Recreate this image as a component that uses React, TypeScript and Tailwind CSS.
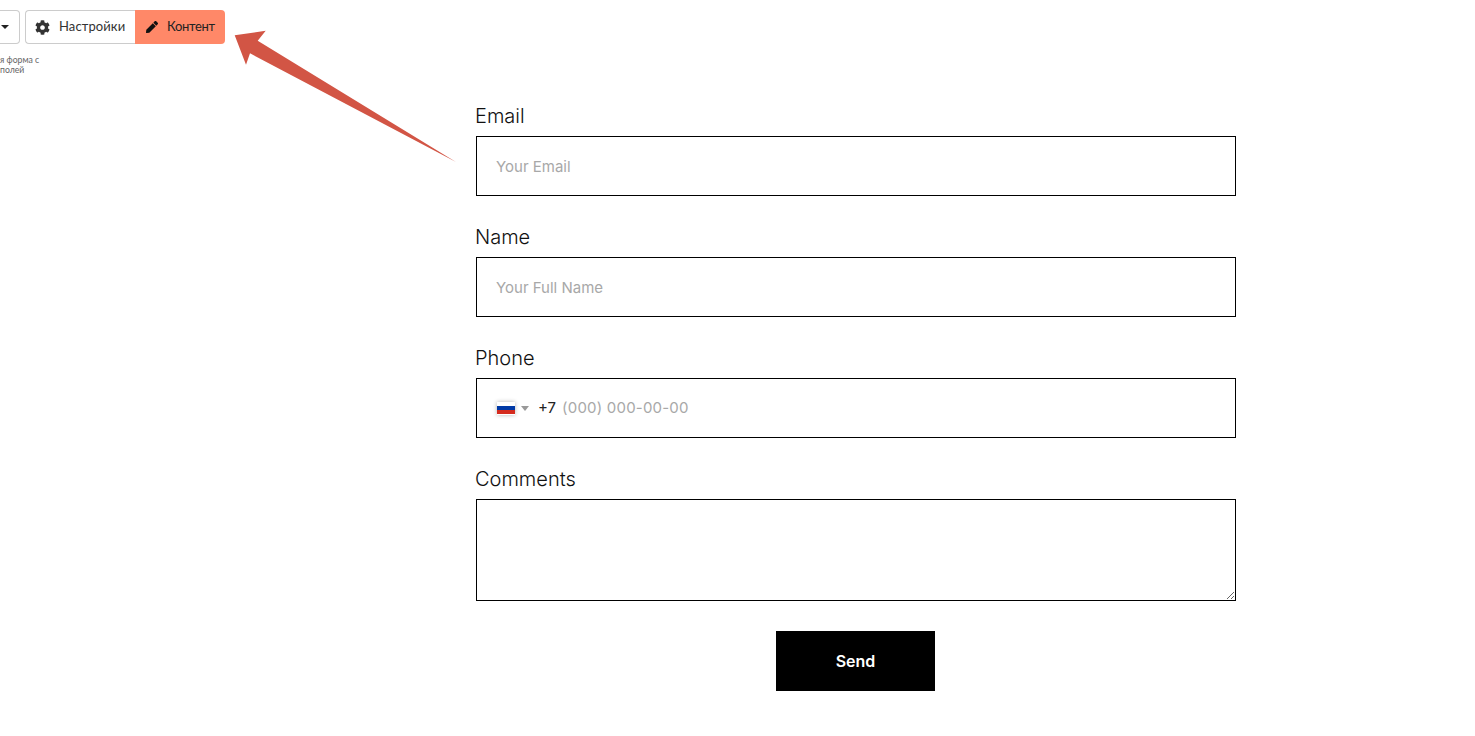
import { FaCog, FaPen } from "react-icons/fa";

const fieldClass =
  "h-[60px] w-full border border-black bg-white pl-[19px] pr-5 text-[15px] text-black outline-none placeholder:text-[#a8a8a8]";

function Toolbar() {
  return (
    <div className="absolute left-0 top-[10px] font-['Lato',sans-serif]">
      <div className="flex h-[34px] items-stretch">
        <div className="flex w-[20px] items-center justify-end rounded-r border border-l-0 border-[#ccc] pr-[10px]">
          <span className="border-x-[4px] border-t-[4px] border-x-transparent border-t-[#222]" />
        </div>
        <div className="ml-[5px] flex w-[110px] items-center gap-[9px] rounded-l border border-r-0 border-[#ccc] pl-[9px] text-[13px] tracking-[0.1px] text-[#333]">
          <FaCog className="size-[15px] text-[#333]" />
          Настройки
        </div>
        <div className="flex w-[90px] items-center gap-[9px] rounded-r bg-[#ff8868] pl-[11px] text-[13px] tracking-[-0.3px] text-[#222]">
          <FaPen className="size-[12px] text-[#111]" />
          Контент
        </div>
      </div>
      <p className="mt-[11px] text-[8.7px] leading-[10px] text-[#666]">
        я форма с
        <br />
        полей
      </p>
    </div>
  );
}

function Arrow() {
  return (
    <svg className="absolute left-0 top-0" width="480" height="170" viewBox="0 0 480 170">
      <polygon
        points="234.7,35.3 265.7,30.7 257.7,40.7 456,162 250,53.3 246,64.7"
        fill="#d25545"
      />
    </svg>
  );
}

function Field({ label, children }: { label: string; children: React.ReactNode }) {
  return (
    <div className="mb-[25px]">
      <label className="mb-[5px] -ml-px block h-[31px] text-xl leading-[32px] font-light text-[#111]">
        {label}
      </label>
      {children}
    </div>
  );
}

export default function App() {
  return (
    <div className="relative h-[736px] overflow-hidden bg-white font-['Inter',sans-serif]">
      <Toolbar />
      <Arrow />
      <form className="ml-[476px] w-[760px] pt-[100px]">
        <Field label="Email">
          <input className={fieldClass} placeholder="Your Email" />
        </Field>
        <Field label="Name">
          <input className={fieldClass} placeholder="Your Full Name" />
        </Field>
        <Field label="Phone">
          <div className="flex h-[60px] items-center border border-black pl-5 text-[15px]">
            <span className="flex h-[13px] w-[18px] flex-col shadow-[0_0_4px_rgba(0,0,0,0.3)]">
              <span className="flex-1 bg-white" />
              <span className="flex-1 bg-[#0039a6]" />
              <span className="flex-1 bg-[#d52b1e]" />
            </span>
            <span className="ml-[6px] border-x-[4px] border-t-[5px] border-x-transparent border-t-[#999]" />
            <span className="ml-[9px] text-[#222]">+7</span>
            <input
              className="ml-[6px] flex-1 tracking-[0.2px] outline-none placeholder:text-[#a8a8a8]"
              placeholder="(000) 000-00-00"
            />
          </div>
        </Field>
        <Field label="Comments">
          <textarea className="block h-[102px] w-full border border-black outline-none" />
        </Field>
        <div className="mt-[30px] flex justify-center pr-px">
          <button
            type="button"
            className="h-[60px] w-[159px] bg-black text-base font-semibold text-white"
          >
            Send
          </button>
        </div>
      </form>
    </div>
  );
}
